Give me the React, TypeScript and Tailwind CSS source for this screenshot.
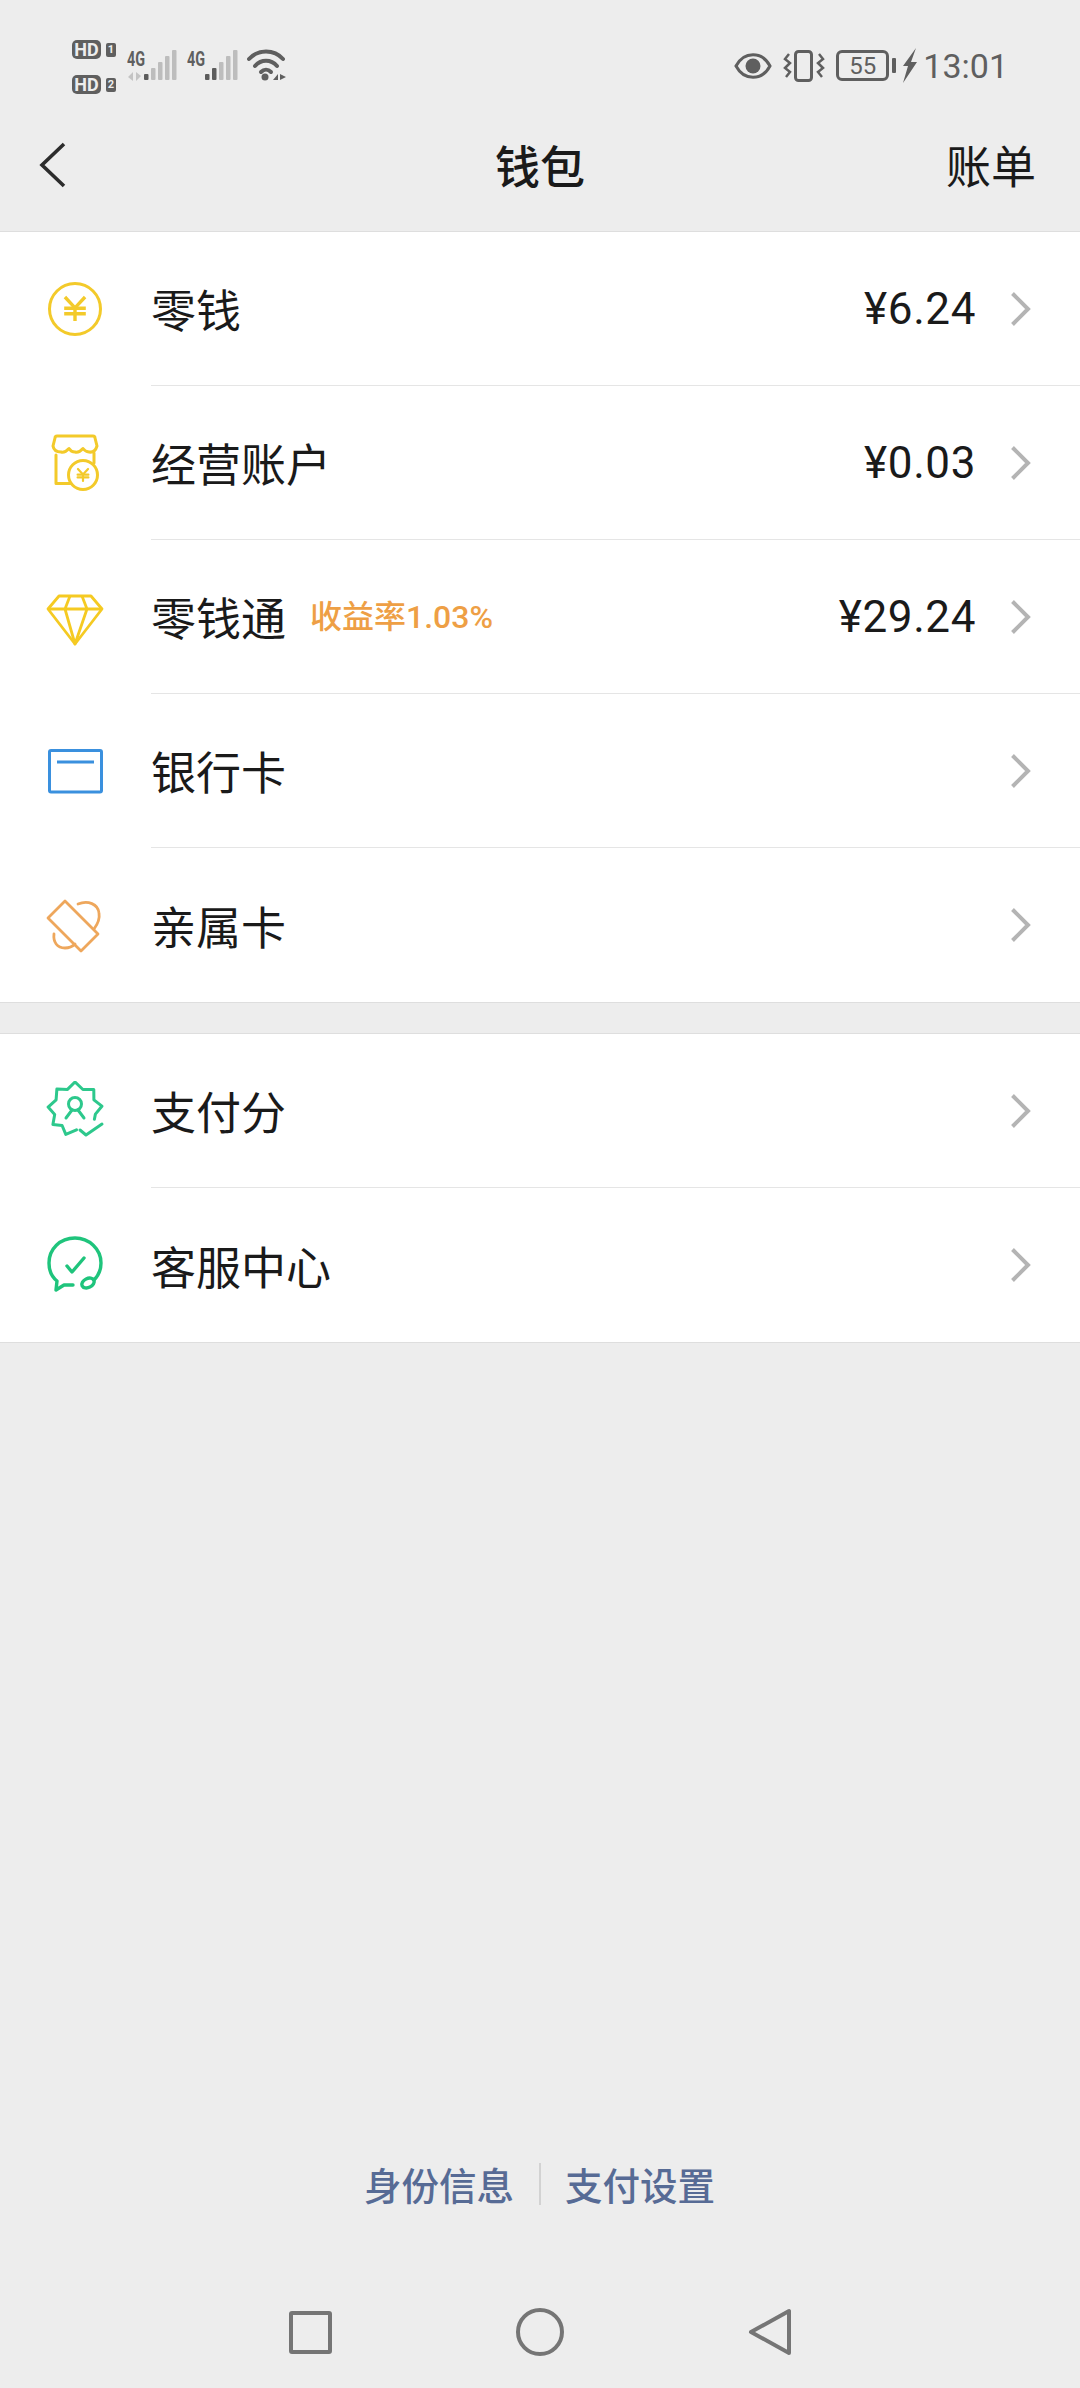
import React from "react";

const cjk = { fontFamily: '"Noto Sans CJK SC", sans-serif' };

function starPath() {
  const list: [number, number][] = [
    [86, 21], [110, 27], [128, 21], [145, 27], [165, 21], [184, 27], [206, 21], [228, 27],
    [249, 21], [270, 27], [292, 21], [314, 27], [334, 21], [354, 27], [374, 21], [388, 22],
  ];
  return list
    .map(([d, r]) => {
      const a = (d * Math.PI) / 180;
      return `${(30 + r * Math.cos(a)).toFixed(1)},${(28 + r * Math.sin(a)).toFixed(1)}`;
    })
    .join(" ");
}

const Yen = ({ cx, cy, s, w, c }: { cx: number; cy: number; s: number; w: number; c: string }) => (
  <g stroke={c} strokeWidth={w} fill="none">
    <path d={`M${cx - s * 0.42} ${cy - s * 0.5}L${cx} ${cy - s * 0.05}L${cx + s * 0.42} ${cy - s * 0.5}`} />
    <path d={`M${cx} ${cy - s * 0.05}V${cy + s * 0.5}M${cx - s * 0.45} ${cy - s * 0.03}H${cx + s * 0.45}M${cx - s * 0.45} ${cy + s * 0.2}H${cx + s * 0.45}`} />
  </g>
);

const icons: Record<string, React.ReactNode> = {
  coin: (
    <>
      <circle cx="30" cy="30" r="25.500" stroke="#f3ca2a" strokeWidth="3" fill="none" />
      <Yen cx={30} cy={30} s={24} w={3.4} c="#f3ca2a" />
    </>
  ),
  store: (
    <g stroke="#f3ca2a" strokeWidth="3" fill="none" strokeLinecap="round" strokeLinejoin="round">
      <path d="M11 22V50.500H26M49 20V30" />
      <path d="M12 3H48Q50 3 50 5L52 13Q50 20 44 19Q40 18.500 38 15.500Q34 20 30 19Q26 19 24 15.500Q20 20 16 19Q9 19 8 13L10 5Q10 3 12 3Z" />
      <circle cx="38" cy="42" r="14.500" fill="#fff" />
      <Yen cx={38} cy={42} s={12} w={2.200} c="#f3ca2a" />
    </g>
  ),
  diamond: (
    <g stroke="#f5ca22" strokeWidth="2.800" fill="none" strokeLinejoin="round">
      <path d="M14 9H46L57 22L30 57L3 22Z" />
      <path d="M3 22H57M25 9L20 22L30 57L42 22L37 9" />
    </g>
  ),
  card: (
    <>
      <rect x="4.500" y="9.500" width="52" height="41.500" rx="1.500" stroke="#3a90de" strokeWidth="3" fill="none" />
      <path d="M12 21H49" stroke="#3a90de" strokeWidth="3" />
    </>
  ),
  family: (
    <g stroke="#eea75c" strokeWidth="2.800" fill="none" strokeLinejoin="round" strokeLinecap="round">
      <path d="M20 6L3 23L36 56L53 39Z" />
      <path d="M33 9C43 5 53 9 54 18C55 24 52 30 49 34" />
      <path d="M9 39C8 47 12 53 20 53C25 53 28 51 30 49" />
    </g>
  ),
  badge: (
    <g stroke="#2dc88c" strokeWidth="3" fill="none" strokeLinejoin="round" strokeLinecap="round">
      <polyline points={starPath()} />
      <circle cx="30" cy="23" r="6.500" />
      <path d="M21 37L27 29M39 37L33 29" />
      <path d="M35 49L41 54L57 43" />
    </g>
  ),
  chat: (
    <g stroke="#1fc47c" strokeWidth="3.400" fill="none" strokeLinejoin="round" strokeLinecap="round">
      <path d="M49 45C54 40 56 34 56 28C56 14 44 3 30 3C15 3 4 14 4 28C4 35 7 42 12 46L11 55L19 50C22 50 25 50 28 50" />
      <ellipse cx="43" cy="48" rx="6.500" ry="4.500" transform="rotate(-25 43 48)" />
      <path d="M22 31L27 37L39 23" />
    </g>
  ),
};

type R = { icon: string; label: string; tag?: string; value?: string };

const Row = ({ r, last }: { r: R; last?: boolean }) => (
  <div className="flex h-[154px] pl-[45px]">
    <div className="flex w-[60px] items-center">
      <svg width="60" height="60" viewBox="0 0 60 60">{icons[r.icon]}</svg>
    </div>
    <div className={`ml-[46px] flex flex-1 items-center pr-[49px] ${last ? "" : "border-b border-[#e5e5e5]"}`}>
      <span className="text-[45px] leading-none text-[#1a1a1a]" style={cjk}>{r.label}</span>
      {r.tag && (
        <span className="ml-[24px] text-[32px] font-medium leading-none text-[#ee9f45]" style={{ fontFamily: 'Roboto, "Noto Sans CJK SC", sans-serif' }}>
          {r.tag}
        </span>
      )}
      <span className="ml-auto text-[44px] leading-none tracking-[0.6px] text-[#1a1a1a]" style={{ fontFamily: "Roboto, sans-serif" }}>{r.value}</span>
      <svg className="ml-[34px]" width="21" height="36" viewBox="0 0 21 36">
        <path d="M2.500 2.500L18 18L2.500 33.500" stroke="#b4b4b4" strokeWidth="4" fill="none" />
      </svg>
    </div>
  </div>
);

const Bars = ({ level, arrows }: { level: number; arrows?: boolean }) => (
  <svg width="33" height="32" viewBox="0 0 33 32">
    {[0, 1, 2, 3, 4].map((i) => (
      <rect key={i} x={i * 7} y={24 - i * 6} width="4.500" height={6 + i * 6} rx="1" fill={i < level ? "#5c5c5c" : "#bdbdbd"} />
    ))}
  </svg>
);

const HD = ({ n }: { n: string }) => (
  <div className="flex items-center gap-[5px]">
    <span className="flex h-[19px] w-[29px] items-center justify-center rounded-[5px] bg-[#5f5f5f] text-[18px] font-bold leading-none text-[#ededed]" style={{ fontFamily: "Roboto, sans-serif" }}>HD</span>
    <span className="flex h-[14px] w-[10px] items-center justify-center rounded-[2px] bg-[#5f5f5f] text-[11px] font-bold leading-none text-[#ededed]" style={{ fontFamily: "Roboto, sans-serif" }}>{n}</span>
  </div>
);

const G4 = () => (
  <span className="inline-block w-[18px] origin-left scale-x-[0.72] text-[20px] font-bold leading-none text-[#5f5f5f]" style={{ fontFamily: "Roboto, sans-serif" }}>4G</span>
);

export default function App() {
  const a: R[] = [
    { icon: "coin", label: "零钱", value: "¥6.24" },
    { icon: "store", label: "经营账户", value: "¥0.03" },
    { icon: "diamond", label: "零钱通", tag: "收益率1.03%", value: "¥29.24" },
    { icon: "card", label: "银行卡" },
    { icon: "family", label: "亲属卡" },
  ];
  const b: R[] = [
    { icon: "badge", label: "支付分" },
    { icon: "chat", label: "客服中心" },
  ];
  return (
    <div className="flex h-[2388px] w-[1080px] flex-col bg-[#ededed]" style={cjk}>
      <div className="flex h-[231px] flex-col">
        <div className="flex h-[100px] items-start justify-between pl-[72px] pr-[72px] pt-[40px]">
          <div className="flex items-start">
            <div className="flex w-[55px] flex-col gap-[16px]">
              <HD n="1" />
              <HD n="2" />
            </div>
            <div className="flex w-[60px] items-start pt-[9px]">
              <div className="flex w-[18px] flex-col gap-[2px]">
                <G4 />
                <svg width="16" height="11" viewBox="0 0 16 11">
                  <path d="M1 6L6 1V10M9 1V10L14 5Z" fill="#c4c4c4" />
                </svg>
              </div>
              <div className="-ml-[1px] pt-[1px]"><Bars level={1} /></div>
            </div>
            <div className="flex w-[60px] items-start pt-[9px]">
              <G4 />
              <div className="pt-[1px]"><Bars level={2} /></div>
            </div>
            <svg className="mt-[8px]" width="40" height="34" viewBox="0 0 40 34">
              <g stroke="#5f5f5f" strokeWidth="4" fill="none" strokeLinecap="round">
                <path d="M2 11C11 1 27 1 36 11" />
                <path d="M8 18C14 11 24 11 30 18" />
                <path d="M14 24C17 21 21 21 24 24" />
              </g>
              <circle cx="18" cy="29" r="3.500" fill="#5f5f5f" />
              <path d="M26 32L31 26V32ZM33 26L39 29L33 32Z" fill="#5f5f5f" />
            </svg>
          </div>
          <div className="flex items-center pt-[8px]">
            <svg width="38" height="28" viewBox="0 0 38 28">
              <path d="M2 14C10 -1 28 -1 36 14C28 29 10 29 2 14Z" stroke="#5f5f5f" strokeWidth="3" fill="none" />
              <circle cx="19" cy="14" r="7.500" fill="#5f5f5f" />
            </svg>
            <svg className="ml-[11px]" width="42" height="32" viewBox="0 0 42 32">
              <rect x="12.500" y="1.500" width="16" height="29" rx="3" stroke="#5f5f5f" strokeWidth="3" fill="none" />
              <path d="M6 4L2 9L7 13L2 18L7 22L3 27M36 4L40 9L35 13L40 18L35 22L39 27" stroke="#5f5f5f" strokeWidth="2.500" fill="none" />
            </svg>
            <div className="ml-[11px] flex h-[31px] w-[53px] items-center justify-center rounded-[6px] border-[3px] border-[#5f5f5f] text-[24px] leading-none text-[#5f5f5f]" style={{ fontFamily: "Roboto, sans-serif" }}>55</div>
            <div className="ml-[3px] h-[15px] w-[4px] rounded-[1px] bg-[#5f5f5f]" />
            <svg className="ml-[6px]" width="15" height="35" viewBox="0 0 15 35">
              <path d="M14 0L1 18H6L1 35L15 14H9Z" fill="#5f5f5f" />
            </svg>
            <span className="ml-[6px] text-[34px] leading-none text-[#5f5f5f]" style={{ fontFamily: "Roboto, sans-serif" }}>13:01</span>
          </div>
        </div>
        <div className="relative flex flex-1 items-center justify-between pb-[2px] pl-[39px] pr-[44px]">
          <svg width="28" height="46" viewBox="0 0 28 46">
            <path d="M25 2L3 23L25 44" stroke="#2c2c2c" strokeWidth="3.600" fill="none" />
          </svg>
          <span className="absolute left-0 right-0 text-center text-[45px] font-medium leading-none text-[#1a1a1a]">钱包</span>
          <span className="text-[45px] leading-none text-[#1a1a1a]">账单</span>
        </div>
      </div>

      <div className="border-y border-[#dedede] bg-white">
        {a.map((r, i) => <Row key={r.label} r={r} last={i === a.length - 1} />)}
      </div>
      <div className="mt-[30px] border-y border-[#dedede] bg-white">
        {b.map((r, i) => <Row key={r.label} r={r} last={i === b.length - 1} />)}
      </div>

      <div className="flex flex-1 flex-col justify-end">
        <div className="flex items-center justify-center">
          <span className="w-[151px] text-[37.5px] font-medium leading-none text-[#576b95]">身份信息</span>
          <div className="mx-[24px] h-[42px] w-[2px] bg-[#d2d2d2]" />
          <span className="w-[151px] text-[37.5px] font-medium leading-none text-[#576b95]">支付设置</span>
        </div>
        <div className="flex h-[183px] items-center justify-center gap-[184px] pt-[71px]">
          <div className="h-[43px] w-[43px] rounded-[3px] border-[4px] border-[#757575]" />
          <div className="h-[48px] w-[48px] rounded-full border-[4px] border-[#757575]" />
          <svg width="44" height="48" viewBox="0 0 44 48">
            <path d="M41 3V45L3 24Z" stroke="#757575" strokeWidth="4" fill="none" strokeLinejoin="round" />
          </svg>
        </div>
      </div>
    </div>
  );
}
